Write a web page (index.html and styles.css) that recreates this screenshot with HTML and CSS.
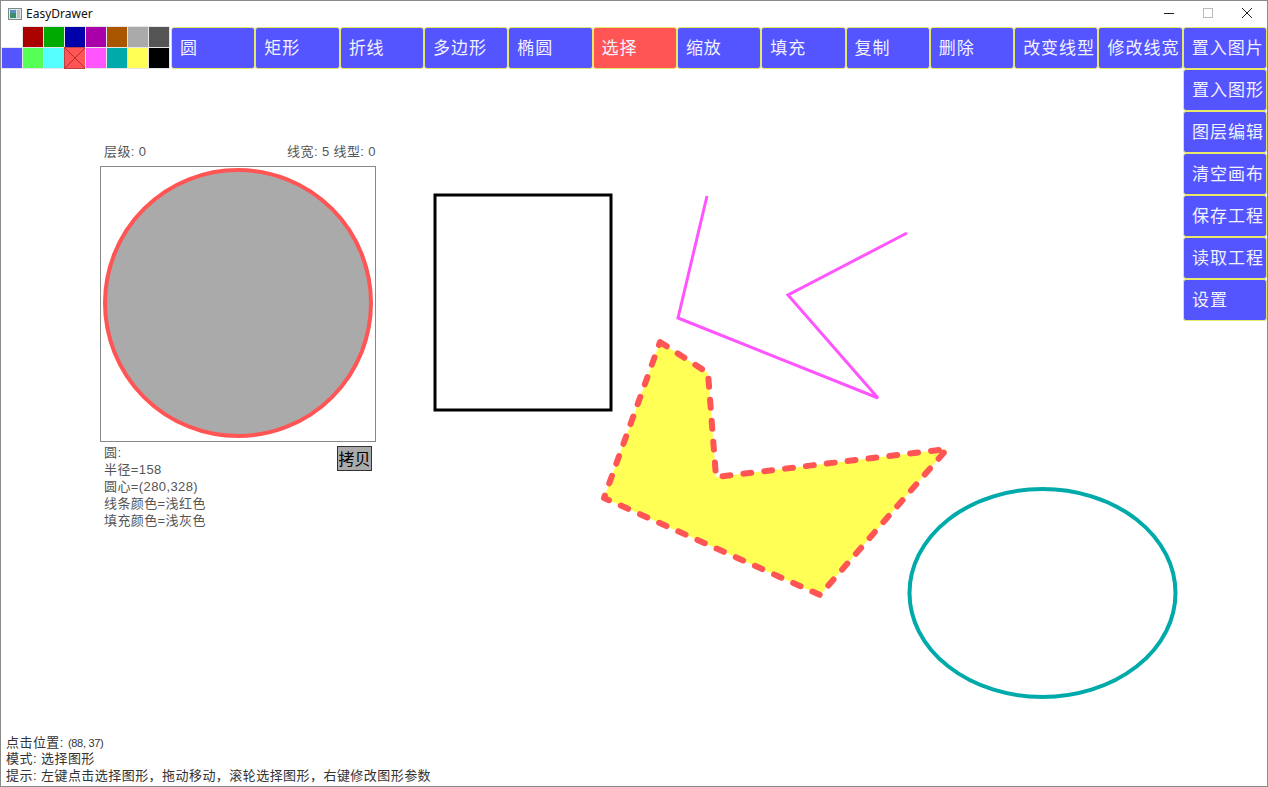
FILE: index.html
```html
<!DOCTYPE html>
<html lang="zh">
<head>
<meta charset="utf-8">
<title>EasyDrawer</title>
<link rel="stylesheet" href="styles.css">
</head>
<body>
<div class="window">
  <svg class="canvas" width="1268" height="787" viewBox="0 0 1268 787">
    <rect x="435" y="195" width="176" height="215" fill="none" stroke="#000" stroke-width="3"/>
    <polyline points="707,196 678,318 878,398 788,295 907,233" fill="none" stroke="#FF55FF" stroke-width="3" stroke-linejoin="miter"/>
    <polygon points="660,342 708,373 716,477 947,449 820,595 604,498" fill="#FFFF55" stroke="#FF5555" stroke-width="6" stroke-dasharray="8 13" stroke-linecap="round" stroke-linejoin="round"/>
    <ellipse cx="1042.5" cy="593" rx="133" ry="104" fill="none" stroke="#00AAAA" stroke-width="4"/>
  </svg>

  <div class="titlebar">
    <svg class="app-icon" width="14" height="12" viewBox="0 0 14 12">
      <rect x="0.5" y="0.5" width="13" height="11" fill="#dfe6e6" stroke="#7d8a8a"/>
      <rect x="2" y="2" width="6" height="8" fill="#3c8c6c"/>
      <rect x="2" y="2" width="6" height="3" fill="#5a8fc0"/>
      <rect x="9" y="2" width="3" height="8" fill="#b8c4c4"/>
    </svg>
    <span class="title">EasyDrawer</span>
    <div class="controls">
      <svg width="12" height="12" viewBox="0 0 12 12"><line x1="1" y1="6.5" x2="11" y2="6.5" stroke="#222" stroke-width="1"/></svg>
      <svg width="12" height="12" viewBox="0 0 12 12"><rect x="1.5" y="1.5" width="9" height="9" fill="none" stroke="#bbb" stroke-width="1"/></svg>
      <svg width="12" height="12" viewBox="0 0 12 12"><path d="M1 1 L11 11 M11 1 L1 11" stroke="#222" stroke-width="1"/></svg>
    </div>
  </div>

  <div class="toolbar">
    <div class="palette">
      <span class="cell c-none"></span>
      <span class="cell" style="background:#AA0000"></span>
      <span class="cell" style="background:#00AA00"></span>
      <span class="cell" style="background:#0000AA"></span>
      <span class="cell" style="background:#AA00AA"></span>
      <span class="cell" style="background:#AA5500"></span>
      <span class="cell" style="background:#AAAAAA"></span>
      <span class="cell" style="background:#555555"></span>
      <span class="cell" style="background:#5555FF"></span>
      <span class="cell" style="background:#55FF55"></span>
      <span class="cell" style="background:#55FFFF"></span>
      <span class="cell cell-x" style="background:#FF5555"><svg width="20" height="20" viewBox="0 0 20 20"><path d="M0 0 L20 20 M20 0 L0 20" stroke="#b03030" stroke-width="1"/></svg></span>
      <span class="cell" style="background:#FF55FF"></span>
      <span class="cell" style="background:#00AAAA"></span>
      <span class="cell" style="background:#FFFF55"></span>
      <span class="cell" style="background:#000000"></span>
    </div>
    <div class="btn">圆</div>
    <div class="btn">矩形</div>
    <div class="btn">折线</div>
    <div class="btn">多边形</div>
    <div class="btn">椭圆</div>
    <div class="btn active">选择</div>
    <div class="btn">缩放</div>
    <div class="btn">填充</div>
    <div class="btn">复制</div>
    <div class="btn">删除</div>
    <div class="btn">改变线型</div>
    <div class="btn">修改线宽</div>
    <div class="btn">置入图片</div>
  </div>

  <div class="body">
    <div class="stage">
      <div class="panel">
        <div class="panel-head">
          <span>层级: 0</span>
          <span>线宽: 5 线型: 0</span>
        </div>
        <div class="preview">
          <svg width="274" height="274" viewBox="0 0 274 274">
            <circle cx="137" cy="136" r="133" fill="#AAAAAA" stroke="#FF5555" stroke-width="4"/>
          </svg>
        </div>
        <div class="panel-foot">
          <div class="info">
            <div>圆:</div>
            <div>半径=158</div>
            <div>圆心=(280,328)</div>
            <div>线条颜色=浅红色</div>
            <div>填充颜色=浅灰色</div>
          </div>
          <div class="copy">拷贝</div>
        </div>
      </div>
    </div>
    <div class="side">
      <div class="btn">置入图形</div>
      <div class="btn">图层编辑</div>
      <div class="btn">清空画布</div>
      <div class="btn">保存工程</div>
      <div class="btn">读取工程</div>
      <div class="btn">设置</div>
    </div>
  </div>

  <div class="status">
    <div>点击位置: <span class="num">(88, 37)</span></div>
    <div>模式: 选择图形</div>
    <div>提示: 左键点击选择图形，拖动移动，滚轮选择图形，右键修改图形参数</div>
  </div>
</div>
</body>
</html>
```

FILE: styles.css
```css
* { box-sizing: border-box; }
html, body { margin: 0; padding: 0; background: #fff; }
body { font-family: "Liberation Sans", "Noto Sans CJK SC", sans-serif; }

.window {
  position: relative;
  width: 1268px;
  height: 787px;
  border: 1px solid #8a8a8a;
  background: #fff;
  display: flex;
  flex-direction: column;
  overflow: hidden;
}

.canvas {
  position: absolute;
  left: -1px;
  top: -1px;
  z-index: 0;
  pointer-events: none;
}

.titlebar {
  position: relative;
  z-index: 1;
  height: 26px;
  display: flex;
  align-items: center;
  padding-left: 7px;
  flex: none;
}
.app-icon { margin-top: -1px; }
.title {
  font-family: "Noto Sans", "Liberation Sans", sans-serif;
  font-size: 12px;
  color: #111;
  margin-left: 4px;
  margin-top: -2px;
}
.controls {
  margin-left: auto;
  display: flex;
  gap: 27px;
  padding-right: 14px;
  margin-top: -2px;
}

.toolbar {
  position: relative;
  z-index: 1;
  display: flex;
  height: 42px;
  flex: none;
}
.palette {
  display: grid;
  grid-template-columns: repeat(8, 20px);
  grid-template-rows: repeat(2, 20px);
  gap: 1px;
  padding: 0 1px 1px 1px;
  width: 170px;
  background: #fff;
  flex: none;
}
.cell {
  display: block;
  width: 20px;
  height: 20px;
  outline: 1px solid #e6e6e6;
}
.c-none { outline: none; background: #fff; }
.cell-x { outline: 1px solid #c04040; }
.cell-x svg { display: block; }

.btn {
  flex: 1;
  height: 42px;
  background: #5555FF;
  border: 1px solid #e8e86a;
  border-radius: 3px;
  color: #f2f2ff;
  font-family: "Noto Sans CJK SC", sans-serif;
  font-size: 17px;
  line-height: 38px;
  padding-left: 8px;
  letter-spacing: 1px;
  white-space: nowrap;
  overflow: hidden;
}
.btn.active { background: #FF5555; }

.body {
  position: relative;
  z-index: 1;
  flex: 1;
  display: flex;
}
.stage { flex: 1; }
.side {
  width: 84px;
  display: flex;
  flex-direction: column;
}
.side .btn { flex: none; }

.panel {
  margin-left: 99px;
  margin-top: 75px;
  width: 276px;
  color: #555;
  font-size: 13px;
  letter-spacing: 0.4px;
}
.panel-head {
  display: flex;
  justify-content: space-between;
  padding: 0 0 0 4px;
  height: 22px;
  line-height: 16px;
}
.preview {
  width: 276px;
  height: 276px;
  border: 1px solid #888;
  background: #fff;
}
.preview svg { display: block; }
.panel-foot {
  display: flex;
  justify-content: space-between;
}
.info {
  padding-left: 4px;
  line-height: 17px;
  margin-top: 2px;
}
.copy {
  margin-top: 4px;
  margin-right: 4px;
  width: 35px;
  height: 25px;
  background: #AAAAAA;
  border: 1px solid #333;
  color: #000;
  font-family: "Noto Sans CJK SC", sans-serif;
  font-size: 16px;
  line-height: 22px;
  text-align: center;
  letter-spacing: 0;
}

.status {
  position: relative;
  z-index: 1;
  flex: none;
  padding: 0 0 2px 5px;
  font-size: 13px;
  line-height: 16.5px;
  letter-spacing: 0.45px;
  color: #333;
}
.status .num { font-size: 11px; letter-spacing: -0.3px; }
```
